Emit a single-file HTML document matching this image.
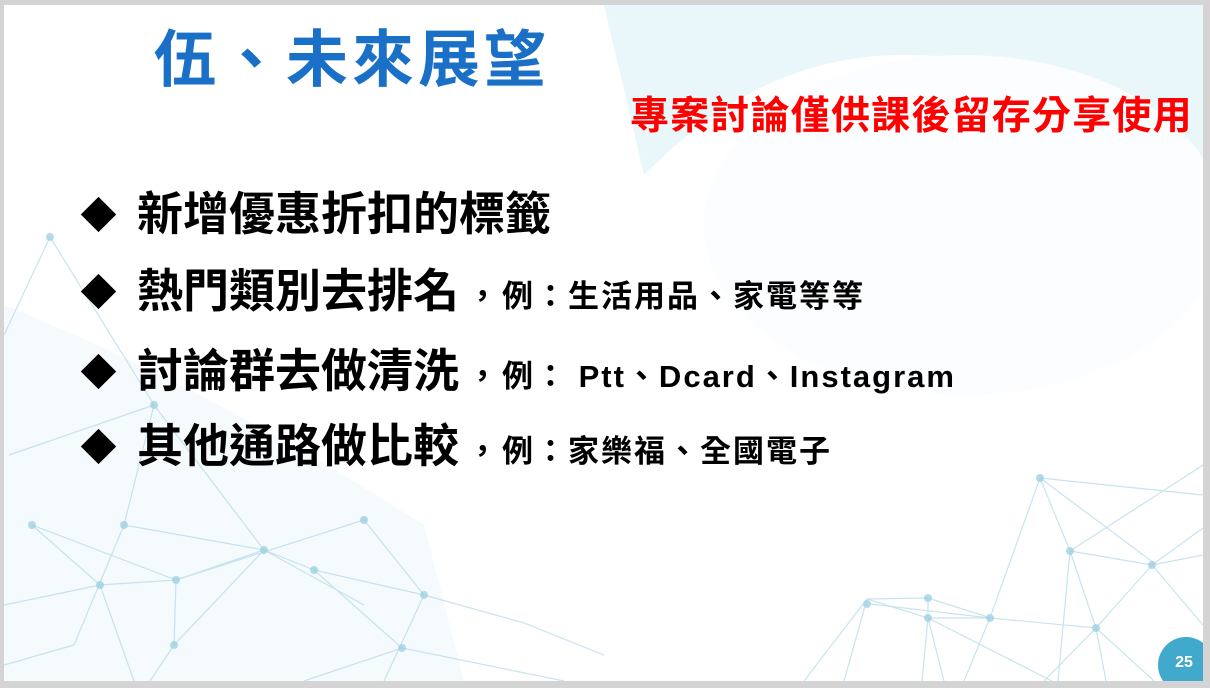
<!DOCTYPE html>
<html><head><meta charset="utf-8"><style>
html,body{margin:0;padding:0;width:1210px;height:688px;background:#d4d4d4;overflow:hidden}
.slide{position:absolute;left:4px;top:5px;width:1199px;height:676px;background:#fff;overflow:hidden;font-family:"Liberation Sans","Noto Sans CJK TC",sans-serif}
.t{position:absolute;white-space:nowrap;font-weight:bold}
.b{position:absolute;left:76px;font-weight:bold;color:#000;font-size:46px;white-space:nowrap;line-height:50px}
.b small{font-size:31px;letter-spacing:2px}
.b i{font-style:normal;font-size:31px;margin:0 4px 0 8px}
.d{display:inline-block;width:25px;height:25px;background:#000;transform:rotate(45deg);margin:0 26px 6px 6px;vertical-align:middle}
</style></head><body>
<div class="slide">
<svg width="1199" height="676" style="position:absolute;left:0;top:0">
<path d="M600 0 L1199 0 L1199 230 C1150 120 1050 50 900 50 C780 50 700 110 640 170 Z" fill="#eaf7fa"/>
<ellipse cx="960" cy="220" rx="260" ry="170" fill="#fbfdfe"/>
<path d="M0 300 Q200 380 420 520 L460 676 L0 676 Z" fill="#f5fafc"/>
<g stroke="#b6dbe8" stroke-width="1.2" fill="none" opacity="0.75">
<path d="M1036 473 L1199 490 M1036 473 L1066 546 L1199 460 M1036 473 L1150 558 M1036 473 L986 613 L866 599 M1066 546 L1148 560 L1199 550 M1066 546 L1092 623 L986 613 M1066 546 L1054 676 M1148 560 L1092 623 L1040 676 M1148 560 L1199 620 M1148 560 L1199 523 M863 594 L924 593 L987 613 M863 594 L924 613 L986 613 M924 593 L924 613 L1048 676 M863 594 L800 676 M863 594 L840 676 M924 613 L918 676 M924 613 L940 676 M986 613 L960 676 M1092 623 L1102 676 M1092 623 L1150 676"/>
<path d="M46 232 L150 400 L120 520 L70 640 M46 232 L0 330 M150 400 L5 450 M150 400 L260 545 L172 575 L28 520 M120 520 L260 545 M28 520 L96 580 L0 600 M96 580 L172 575 L170 640 L260 545 M172 575 L360 515 L420 590 L310 565 M310 565 L260 545 M420 590 L520 618 L600 650 M420 590 L380 676 M310 565 L398 643 L560 676 M398 643 L300 676 M170 640 L146 676 M70 640 L0 660 M260 545 L360 600 M96 580 L130 676"/>
</g>
<g fill="#9ccfe1" opacity="0.75">
<circle cx="1036" cy="473" r="4"/><circle cx="1066" cy="546" r="4"/><circle cx="1148" cy="560" r="4"/><circle cx="1092" cy="623" r="4"/><circle cx="986" cy="613" r="4"/><circle cx="924" cy="593" r="4"/><circle cx="924" cy="613" r="4"/><circle cx="863" cy="599" r="4"/>
<circle cx="46" cy="232" r="4"/><circle cx="150" cy="400" r="4"/><circle cx="120" cy="520" r="4"/><circle cx="28" cy="520" r="4"/><circle cx="96" cy="580" r="4"/><circle cx="172" cy="575" r="4"/><circle cx="260" cy="545" r="4"/><circle cx="310" cy="565" r="4"/><circle cx="360" cy="515" r="4"/><circle cx="420" cy="590" r="4"/><circle cx="398" cy="643" r="4"/><circle cx="170" cy="640" r="4"/>
</g>
<circle cx="1182" cy="660" r="28" fill="#41a9cb"/>
<text x="1180" y="662" font-family="Liberation Sans" font-weight="bold" font-size="16" fill="#fff" text-anchor="middle">25</text>
</svg>
<div class="t" style="left:150px;top:18px;font-size:62px;color:#1a70c6;line-height:76px;letter-spacing:4px">伍、未來展望</div>
<div class="t" style="left:626px;top:88px;font-size:39px;color:#f00;line-height:48px;letter-spacing:1.2px">專案討論僅供課後留存分享使用</div>
<div class="b" style="top:184px"><span class="d"></span>新增優惠折扣的標籤</div>
<div class="b" style="top:261px"><span class="d"></span>熱門類別去排名<i>，</i><small>例：生活用品、家電等等</small></div>
<div class="b" style="top:341px"><span class="d"></span>討論群去做清洗<i>，</i><small>例： Ptt、Dcard、Instagram</small></div>
<div class="b" style="top:416px"><span class="d"></span>其他通路做比較<i>，</i><small>例：家樂福、全國電子</small></div>
</div>
</body></html>
